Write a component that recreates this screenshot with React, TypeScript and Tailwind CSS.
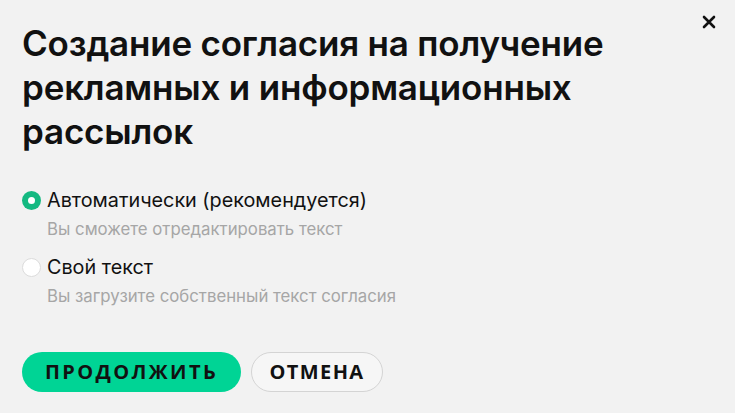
import React, { useState } from 'react';

type Option = {
  id: string;
  label: string;
  hint: string;
};

const options: Option[] = [
  { id: 'auto', label: 'Автоматически (рекомендуется)', hint: 'Вы сможете отредактировать текст' },
  { id: 'custom', label: 'Свой текст', hint: 'Вы загрузите собственный текст согласия' },
];

const CloseIcon: React.FC = () => (
  <svg width="14" height="14" viewBox="0 0 14 14" fill="none">
    <path d="M2 2L12 12M12 2L2 12" stroke="#111" strokeWidth="2.6" strokeLinecap="round" />
  </svg>
);

const App: React.FC = () => {
  const [selected, setSelected] = useState('auto');

  return (
    <div className="relative min-h-[413px] w-full bg-[#f2f2f2] px-[22px] pt-[21px] font-['Inter',sans-serif] text-[#111]">
      <button className="absolute right-[16px] top-[12px] flex h-[20px] w-[20px] items-center justify-center">
        <CloseIcon />
      </button>

      <h1 className="max-w-[640px] text-[35px] font-semibold leading-[44px] tracking-[-0.2px]">
        Создание согласия на получение рекламных и информационных рассылок
      </h1>

      <div className="mt-[35px] flex flex-col gap-[16px]">
        {options.map(opt => {
          const active = selected === opt.id;
          return (
            <label key={opt.id} className="flex cursor-pointer flex-col" onClick={() => setSelected(opt.id)}>
              <span className="flex items-center gap-[6px]">
                {active ? (
                  <span className="flex h-[19px] w-[19px] items-center justify-center rounded-full bg-[#14b981]">
                    <span className="h-[7px] w-[7px] rounded-full bg-white" />
                  </span>
                ) : (
                  <span className="h-[19px] w-[19px] rounded-full border border-[#dcdcdc] bg-white" />
                )}
                <span className="text-[19.8px] leading-[24px]">{opt.label}</span>
              </span>
              <span className="ml-[25px] mt-[7px] text-[16.8px] leading-[20px] text-[#a6a6a6]">{opt.hint}</span>
            </label>
          );
        })}
      </div>

      <div className="mt-[46px] flex gap-[10px] font-['Open_Sans',sans-serif]">
        <button className="h-[40px] w-[219px] rounded-full bg-[#00d495] text-[20px] font-bold tracking-[2.4px] text-[#111]">
          ПРОДОЛЖИТЬ
        </button>
        <button className="h-[40px] w-[132px] rounded-full border border-[#d4d4d4] bg-[#f6f6f6] text-[20px] font-bold tracking-[1.4px] text-[#111]">
          ОТМЕНА
        </button>
      </div>
    </div>
  );
};

export default App;
